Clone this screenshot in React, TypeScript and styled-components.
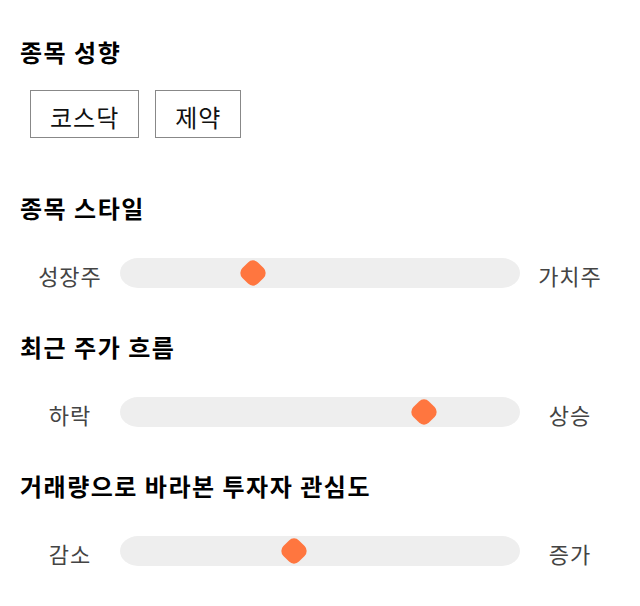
import React from 'react';
import styled, { createGlobalStyle } from 'styled-components';

const GlobalStyle = createGlobalStyle`
  body {
    margin: 0;
    background: #ffffff;
    font-family: "Noto Sans CJK KR", "Noto Sans", sans-serif;
  }
`;

const sliders = [
  { title: '종목 스타일', left: '성장주', right: '가치주', value: 0.32 },
  { title: '최근 주가 흐름', left: '하락', right: '상승', value: 0.78 },
  { title: '거래량으로 바라본 투자자 관심도', left: '감소', right: '증가', value: 0.43 },
];

export default function App() {
  return (
    <>
      <GlobalStyle />
      <Page>
        <Section>
          <Heading>종목 성향</Heading>
          <TagRow>
            <Tag>코스닥</Tag>
            <Tag>제약</Tag>
          </TagRow>
        </Section>
        {sliders.map((s) => (
          <SliderSection key={s.title}>
            <Heading>{s.title}</Heading>
            <SliderRow>
              <SideLabel>{s.left}</SideLabel>
              <Track>
                <Thumb style={{ left: `calc(${s.value} * (100% - 30px))` }} />
              </Track>
              <SideLabel>{s.right}</SideLabel>
            </SliderRow>
          </SliderSection>
        ))}
      </Page>
    </>
  );
}

const Page = styled.main`
  width: 640px;
  padding: 37px 20px 0;
  box-sizing: border-box;
`;

const Section = styled.section`
  display: flex;
  flex-direction: column;
  gap: 23px;
  margin-bottom: 55px;
`;

const SliderSection = styled.section`
  display: flex;
  flex-direction: column;
  gap: 33px;
  margin-bottom: 46px;
`;

const Heading = styled.h2`
  margin: 0;
  font-size: 24px;
  line-height: 30px;
  letter-spacing: 1.5px;
  font-weight: 700;
  color: #000;
`;

const TagRow = styled.div`
  display: flex;
  gap: 16px;
  padding-left: 10px;
`;

const Tag = styled.button`
  height: 48px;
  padding: 4px 19px 0;
  border: 1px solid #888;
  background: #fff;
  font-family: inherit;
  font-size: 24px;
  letter-spacing: 1px;
  color: #111;
  cursor: pointer;
`;

const SliderRow = styled.div`
  display: grid;
  grid-template-columns: 100px 400px 100px;
  align-items: center;
  height: 30px;
`;

const SideLabel = styled.span`
  text-align: center;
  font-size: 22px;
  letter-spacing: 1px;
  color: #444;
  line-height: 30px;
  padding-top: 4px;
`;

const Track = styled.div`
  position: relative;
  height: 30px;
  background: #eeeeee;
  border-radius: 18px / 15px;
`;

const Thumb = styled.div`
  position: absolute;
  top: 0;
  width: 30px;
  height: 30px;

  &::before {
    content: '';
    position: absolute;
    left: 4px;
    top: 4px;
    width: 22px;
    height: 22px;
    background: #ff763f;
    border-radius: 7px;
    transform: rotate(45deg);
  }
`;
